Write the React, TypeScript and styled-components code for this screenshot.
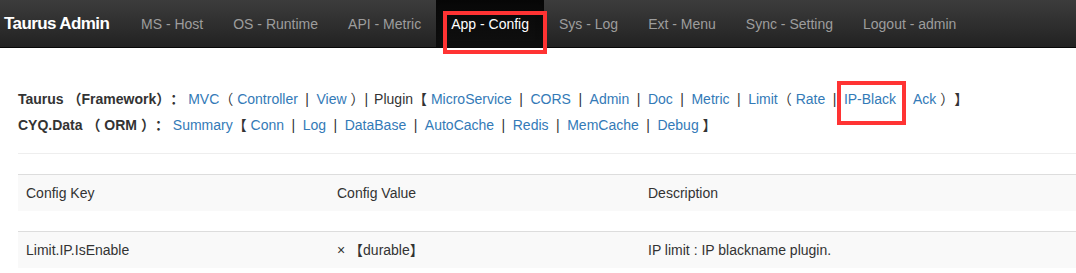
import styled, { createGlobalStyle } from "styled-components";

//style variables
const textColor = "#333";
const linkColor = "#337ab7";
const navText = "#9d9d9d";
const markRed = "#f33";
const lineColor = "#ddd";
const stripe = "#f9f9f9";

const GlobalStyle = createGlobalStyle`
  html, body {
    margin: 0;
    padding: 0;
    background: #fff;
    overflow: hidden;
  }
  body {
    font-family: "Liberation Sans", "Noto Sans CJK SC", Arial, sans-serif;
    font-size: 14px;
    line-height: 20px;
    color: ${textColor};
    text-spacing-trim: space-all;
  }
`;

const NavBar = styled.nav`
  position: relative;
  z-index: 2;
  display: flex;
  align-items: stretch;
  height: 48px;
  box-sizing: border-box;
  background: linear-gradient(to bottom, #3c3c3c 0%, #222 100%);
  border-bottom: 1px solid #080808;
`;

const Brand = styled.a`
  flex: 0 0 126px;
  box-sizing: border-box;
  display: flex;
  align-items: center;
  padding-left: 4px;
  color: #fff;
  font-size: 17px;
  font-weight: bold;
  letter-spacing: -0.6px;
  text-decoration: none;
`;

const NavItem = styled.a<{ $active?: boolean }>`
  position: relative;
  display: flex;
  align-items: center;
  padding: 0 15px;
  white-space: nowrap;
  text-decoration: none;
  color: ${(p) => (p.$active ? "#fff" : navText)};
  background: ${(p) =>
    p.$active ? "linear-gradient(to bottom, #080808 0%, #0f0f0f 100%)" : "none"};
  box-shadow: ${(p) => (p.$active ? "inset 0 3px 9px rgba(0, 0, 0, 0.25)" : "none")};
`;

// red annotation frame drawn over the screenshot
const Mark = styled.span<{ $x: number; $y: number; $w: number; $h: number }>`
  position: absolute;
  left: ${(p) => p.$x}px;
  top: ${(p) => p.$y}px;
  width: ${(p) => p.$w}px;
  height: ${(p) => p.$h}px;
  box-sizing: border-box;
  border: 4px solid ${markRed};
  pointer-events: none;
`;

const Main = styled.main`
  padding: 38px 0 0 18px;
`;

const Line = styled.div`
  height: 26px;
  line-height: 26px;
  white-space: nowrap;
`;

const Label = styled.b`
  font-weight: bold;
  color: ${textColor};
`;

const Link = styled.a`
  position: relative;
  color: ${linkColor};
  text-decoration: none;
`;

const Sep = styled.span<{ $tight?: boolean }>`
  margin: ${(p) => (p.$tight ? "0 6px 0 0" : "0 7.5px")};
`;

const Gap = styled.span`
  display: inline-block;
  width: 17px;
`;

const Rule = styled.hr`
  height: 0;
  margin: 15px 0 20px;
  border: 0;
  border-top: 1px solid #eee;
`;

const ConfigRow = styled.div`
  display: grid;
  grid-template-columns: 311px 311px 1fr;
  border-top: 1px solid ${lineColor};
  background: ${stripe};
  & + & {
    margin-top: 20px;
  }
`;

const Cell = styled.div`
  padding: 8px;
  line-height: 20px;
  white-space: nowrap;
`;

const navItems = [
  "MS - Host",
  "OS - Runtime",
  "API - Metric",
  "App - Config",
  "Sys - Log",
  "Ext - Menu",
  "Sync - Setting",
  "Logout - admin",
];

const ormLinks = ["Conn", "Log", "DataBase", "AutoCache", "Redis", "MemCache", "Debug"];
const pluginLinks = ["MicroService", "CORS", "Admin", "Doc", "Metric"];

const App = () => {
  return (
    <>
      <GlobalStyle />
      <NavBar>
        <Brand>Taurus Admin</Brand>
        {navItems.map((item) => (
          <NavItem key={item} $active={item === "App - Config"}>
            {item}
            {item === "App - Config" ? <Mark $x={7} $y={11} $w={104} $h={43} /> : null}
          </NavItem>
        ))}
      </NavBar>
      <Main>
        <Line>
          <Label>Taurus （Framework）：</Label> <Link>MVC</Link>（ <Link>Controller</Link>
          <Sep>|</Sep>
          <Link>View</Link> ）<Sep $tight>|</Sep>Plugin【{" "}
          {pluginLinks.map((name) => (
            <span key={name}>
              <Link>{name}</Link>
              <Sep>|</Sep>
            </span>
          ))}
          <Link>Limit</Link>（ <Link>Rate</Link>
          <Sep>|</Sep>
          <Link>
            IP-Black
            <Mark $x={-7} $y={-10} $w={69} $h={44} />
          </Link>
          <Gap />
          <Link>Ack</Link> ）】
        </Line>
        <Line>
          <Label>CYQ.Data （ ORM ）：</Label> <Link>Summary</Link>【{" "}
          {ormLinks.map((name, i) => (
            <span key={name}>
              <Link>{name}</Link>
              {i < ormLinks.length - 1 ? <Sep>|</Sep> : null}
            </span>
          ))}{" "}
          】
        </Line>
        <Rule />
        <ConfigRow>
          <Cell>Config Key</Cell>
          <Cell>Config Value</Cell>
          <Cell>Description</Cell>
        </ConfigRow>
        <ConfigRow>
          <Cell>Limit.IP.IsEnable</Cell>
          <Cell>× 【durable】</Cell>
          <Cell>IP limit : IP blackname plugin.</Cell>
        </ConfigRow>
      </Main>
    </>
  );
};

export default App;
